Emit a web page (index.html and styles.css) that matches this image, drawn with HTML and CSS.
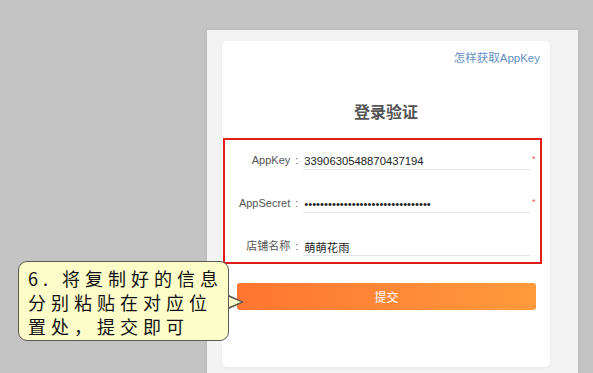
FILE: index.html
```html
<!DOCTYPE html>
<html lang="zh-CN">
<head>
    <meta charset="UTF-8">
    <meta name="viewport" content="width=device-width, initial-scale=1.0">
    <title>登录验证</title>
    <link rel="stylesheet" href="styles.css">
</head>
<body>
    <div class="pannello">
        <div class="scheda">
            <div class="riga-link">
                <a class="link-aiuto" href="#">怎样获取AppKey</a>
            </div>

            <h1 class="titolo">登录验证</h1>

            <div class="modulo">
                <div class="campo">
                    <label class="etichetta">AppKey<span class="due-punti">:</span></label>
                    <input class="valore" type="text" value="3390630548870437194">
                    <span class="obbligatorio">*</span>
                </div>
                <div class="campo">
                    <label class="etichetta">AppSecret<span class="due-punti">:</span></label>
                    <input class="valore" type="password" value="abcdefghijklmnopqrstuvwxyz123456">
                    <span class="obbligatorio">*</span>
                </div>
                <div class="campo">
                    <label class="etichetta">店铺名称<span class="due-punti">:</span></label>
                    <input class="valore" type="text" value="萌萌花雨">
                    <span class="obbligatorio"></span>
                </div>
            </div>

            <button class="invia">提交</button>
        </div>
    </div>

    <div class="fumetto">
        <p>6. 将复制好的信息</p>
        <p>分别粘贴在对应位</p>
        <p>置处，提交即可</p>
    </div>
</body>
</html>
```

FILE: styles.css
```css
* {
    box-sizing: border-box;
    margin: 0;
    padding: 0;
}

body {
    font-family: 'Liberation Sans', 'Noto Sans CJK SC', sans-serif;
    background: #c4c4c4;
    height: 100vh;
    overflow: hidden;
}

.pannello {
    margin: 30px 0 0 207px;
    width: 371px;
    height: 360px;
    background: #f3f3f3;
    padding: 11px 28px 0 15px;
    box-shadow: 0 0 5px rgba(0, 0, 0, 0.08);
}

.scheda {
    background: #fff;
    border-radius: 5px;
    height: 326px;
    padding-top: 8px;
    box-shadow: 0 1px 3px rgba(0, 0, 0, 0.05);
}

.riga-link {
    text-align: right;
    padding-right: 10px;
    height: 15px;
    line-height: 15px;
}

.link-aiuto {
    font-size: 11.5px;
    color: #5f8fc4;
    text-decoration: none;
}

.titolo {
    text-align: center;
    font-size: 16px;
    font-weight: 700;
    color: #555;
    line-height: 20px;
    margin-top: 39px;
}

.modulo {
    margin: 15px 8px 0 1px;
    border: 2px solid #e21b1b;
    padding: 10px 0 6px;
}

.campo {
    display: flex;
    align-items: flex-end;
    height: 20px;
}

.campo + .campo {
    margin-top: 23px;
}

.etichetta {
    width: 79px;
    text-align: right;
    font-size: 11px;
    color: #555;
    line-height: 19px;
}

.due-punti {
    display: inline-block;
    width: 13px;
    text-align: center;
}

.valore {
    width: 229px;
    height: 20px;
    border: none;
    border-bottom: 1px solid #e6e6e6;
    outline: none;
    font-family: inherit;
    font-size: 11.3px;
    color: #222;
    padding: 2px 0 0 1px;
    background: transparent;
}

.obbligatorio {
    align-self: flex-start;
    width: 10px;
    padding: 3px 0 0 2px;
    font-size: 9px;
    color: #e55;
    line-height: 12px;
}

.invia {
    display: block;
    width: 299px;
    height: 27px;
    margin: 19px 0 0 15px;
    border: none;
    border-radius: 3px;
    background: linear-gradient(90deg, #ff7531 0%, #ff9a3c 100%);
    color: #fff;
    font-family: inherit;
    font-size: 12px;
    cursor: pointer;
}

.fumetto {
    position: absolute;
    left: 18px;
    top: 261px;
    width: 211px;
    height: 80px;
    background: #fdfdca;
    border: 1.5px solid #5a5a52;
    border-radius: 9px;
    padding: 4px 0 0 9px;
    font-family: 'Noto Sans CJK SC', sans-serif;
    font-size: 18px;
    letter-spacing: 5px;
    line-height: 24px;
    color: #111;
}

.fumetto p {
    height: 24px;
}

.fumetto::before,
.fumetto::after {
    content: '';
    position: absolute;
    top: 33px;
    border-style: solid;
    border-color: transparent;
}

.fumetto::before {
    right: -16px;
    border-width: 7px 0 7px 15px;
    border-left-color: #5a5a52;
}

.fumetto::after {
    right: -13px;
    top: 35px;
    border-width: 5px 0 5px 12px;
    border-left-color: #fdfdca;
}
```
